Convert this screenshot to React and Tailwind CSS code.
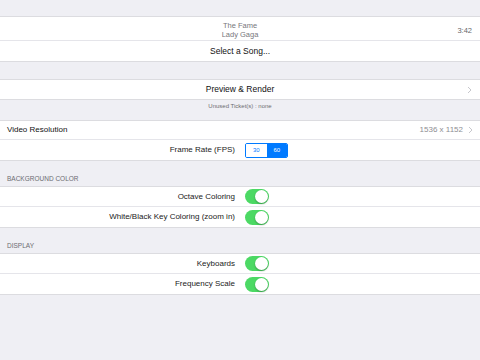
import React from "react";

function Chevron() {
  return (
    <svg width="5" height="8" viewBox="0 0 5 8" className="ml-[5px]">
      <path d="M1 1l3 3-3 3" fill="none" stroke="#c7c7cc" strokeWidth="1" />
    </svg>
  );
}

function Toggle() {
  return (
    <div className="w-[24px] h-[15px] rounded-full bg-[#4cd964] relative">
      <div className="absolute right-[1px] top-[1px] w-[13px] h-[13px] rounded-full bg-white shadow-[0_1px_2px_rgba(0,0,0,0.3)]" />
    </div>
  );
}

function SwitchRow({ label, last }) {
  return (
    <div className={"h-[20px] flex items-center bg-white " + (last ? "" : "border-b border-[#e5e5ea]")}>
      <div className="w-[235px] text-right text-[8px] text-[#222]">{label}</div>
      <div className="ml-[10px]">
        <Toggle />
      </div>
    </div>
  );
}

export default function App() {
  return (
    <div
      className="w-[480px] h-[360px] bg-[#efeff4] overflow-hidden"
      style={{ fontFamily: '"Liberation Sans", Arial, sans-serif' }}
    >
      <div className="h-[16px]" />
      <div className="border-t border-b border-[#dcdce0] bg-white">
        <div className="h-[24px] flex items-center relative border-b border-[#e5e5ea]">
          <div className="w-full text-center text-[7.5px] leading-[9px] pt-[3px] text-[#77777c]">
            <div>The Fame</div>
            <div>Lady Gaga</div>
          </div>
          <div className="absolute right-[8px] top-[8px] text-[7.5px] text-[#66666b]">3:42</div>
        </div>
        <div className="h-[20px] flex items-center justify-center text-[8.5px] text-[#111]">Select a Song...</div>
      </div>

      <div className="h-[17px]" />
      <div className="border-t border-b border-[#dcdce0] bg-white h-[21px] flex items-center relative">
        <div className="w-full text-center text-[8.5px] text-[#111]">Preview &amp; Render</div>
        <div className="absolute right-[8px] top-[6px]">
          <Chevron />
        </div>
      </div>
      <div className="h-[20px] flex items-start justify-center pt-[2px] text-[6px] text-[#6d6d72]">
        Unused Ticket(s) : none
      </div>

      <div className="border-t border-b border-[#dcdce0] bg-white">
        <div className="h-[19px] flex items-center px-[7px] border-b border-[#e5e5ea]">
          <div className="text-[8px] text-[#111]">Video Resolution</div>
          <div className="ml-auto flex items-center text-[8px] text-[#8e8e93]">
            1536 x 1152
            <Chevron />
          </div>
        </div>
        <div className="h-[20px] flex items-center">
          <div className="w-[235px] text-right text-[8px] text-[#222]">Frame Rate (FPS)</div>
          <div className="ml-[10px] flex w-[43px] h-[15px] border border-[#007aff] rounded-[2px] overflow-hidden text-[6px]">
            <div className="flex-1 flex items-center justify-center text-[#007aff] bg-white">30</div>
            <div className="flex-1 flex items-center justify-center text-white bg-[#007aff]">60</div>
          </div>
        </div>
      </div>

      <div className="h-[25px] flex items-end px-[7px] pb-[2px] text-[6.5px] text-[#6d6d72]">BACKGROUND COLOR</div>
      <div className="border-t border-b border-[#dcdce0]">
        <SwitchRow label="Octave Coloring" />
        <SwitchRow label="White/Black Key Coloring (zoom in)" last />
      </div>

      <div className="h-[25px] flex items-end px-[7px] pb-[2px] text-[6.5px] text-[#6d6d72]">DISPLAY</div>
      <div className="border-t border-b border-[#dcdce0]">
        <SwitchRow label="Keyboards" />
        <SwitchRow label="Frequency Scale" last />
      </div>
    </div>
  );
}
